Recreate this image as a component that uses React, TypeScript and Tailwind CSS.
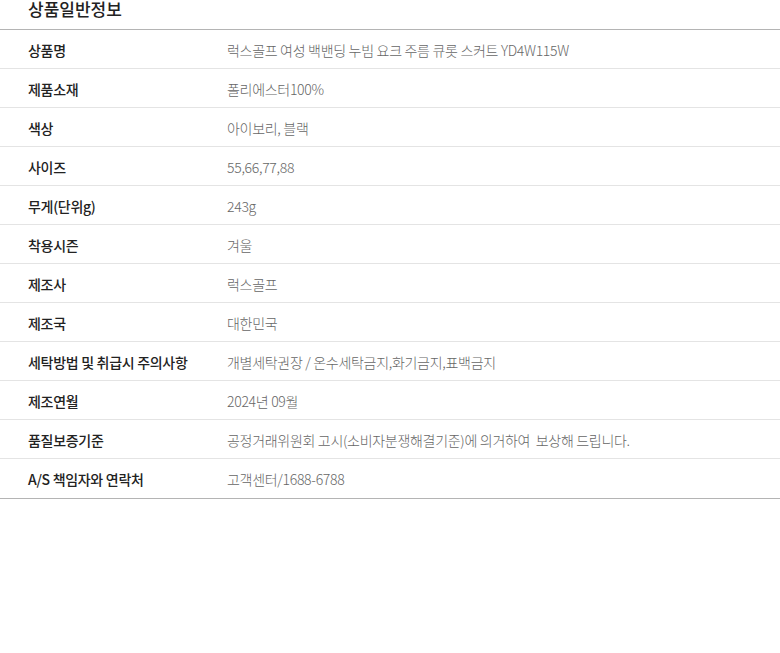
const rows: [string, string][] = [
  ["상품명", "럭스골프 여성 백밴딩 누빔 요크 주름 큐롯 스커트 YD4W115W"],
  ["제품소재", "폴리에스터100%"],
  ["색상", "아이보리, 블랙"],
  ["사이즈", "55,66,77,88"],
  ["무게(단위g)", "243g"],
  ["착용시즌", "겨울"],
  ["제조사", "럭스골프"],
  ["제조국", "대한민국"],
  ["세탁방법 및 취급시 주의사항", "개별세탁권장 / 온수세탁금지,화기금지,표백금지"],
  ["제조연월", "2024년 09월"],
  ["품질보증기준", "공정거래위원회 고시(소비자분쟁해결기준)에 의거하여  보상해 드립니다."],
  ["A/S 책임자와 연락처", "고객센터/1688-6788"],
];

export default function App() {
  return (
    <div
      className="w-[780px] h-[653px] bg-white overflow-hidden"
      style={{ fontFamily: '"Noto Sans CJK KR", "Noto Sans", sans-serif' }}
    >
      <div className="h-[29px] pl-[28px] text-[17px] leading-[17px] font-medium text-[#222]">
        <div>상품일반정보</div>
      </div>
      <div className="border-t border-b border-[#b4b4b4]">
        {rows.map(([k, v], i) => (
          <div
            key={i}
            className={`flex items-center h-[39px] pt-[2px] ${i < rows.length - 1 ? "border-b border-[#e4e4e4]" : ""}`}
          >
            <div className="w-[227px] shrink-0 pl-[28px] text-[14px] font-medium text-[#222] tracking-[-0.3px]">{k}</div>
            <div className="text-[14px] font-light text-[#666] tracking-[-0.3px] whitespace-pre">{v}</div>
          </div>
        ))}
      </div>
    </div>
  );
}
